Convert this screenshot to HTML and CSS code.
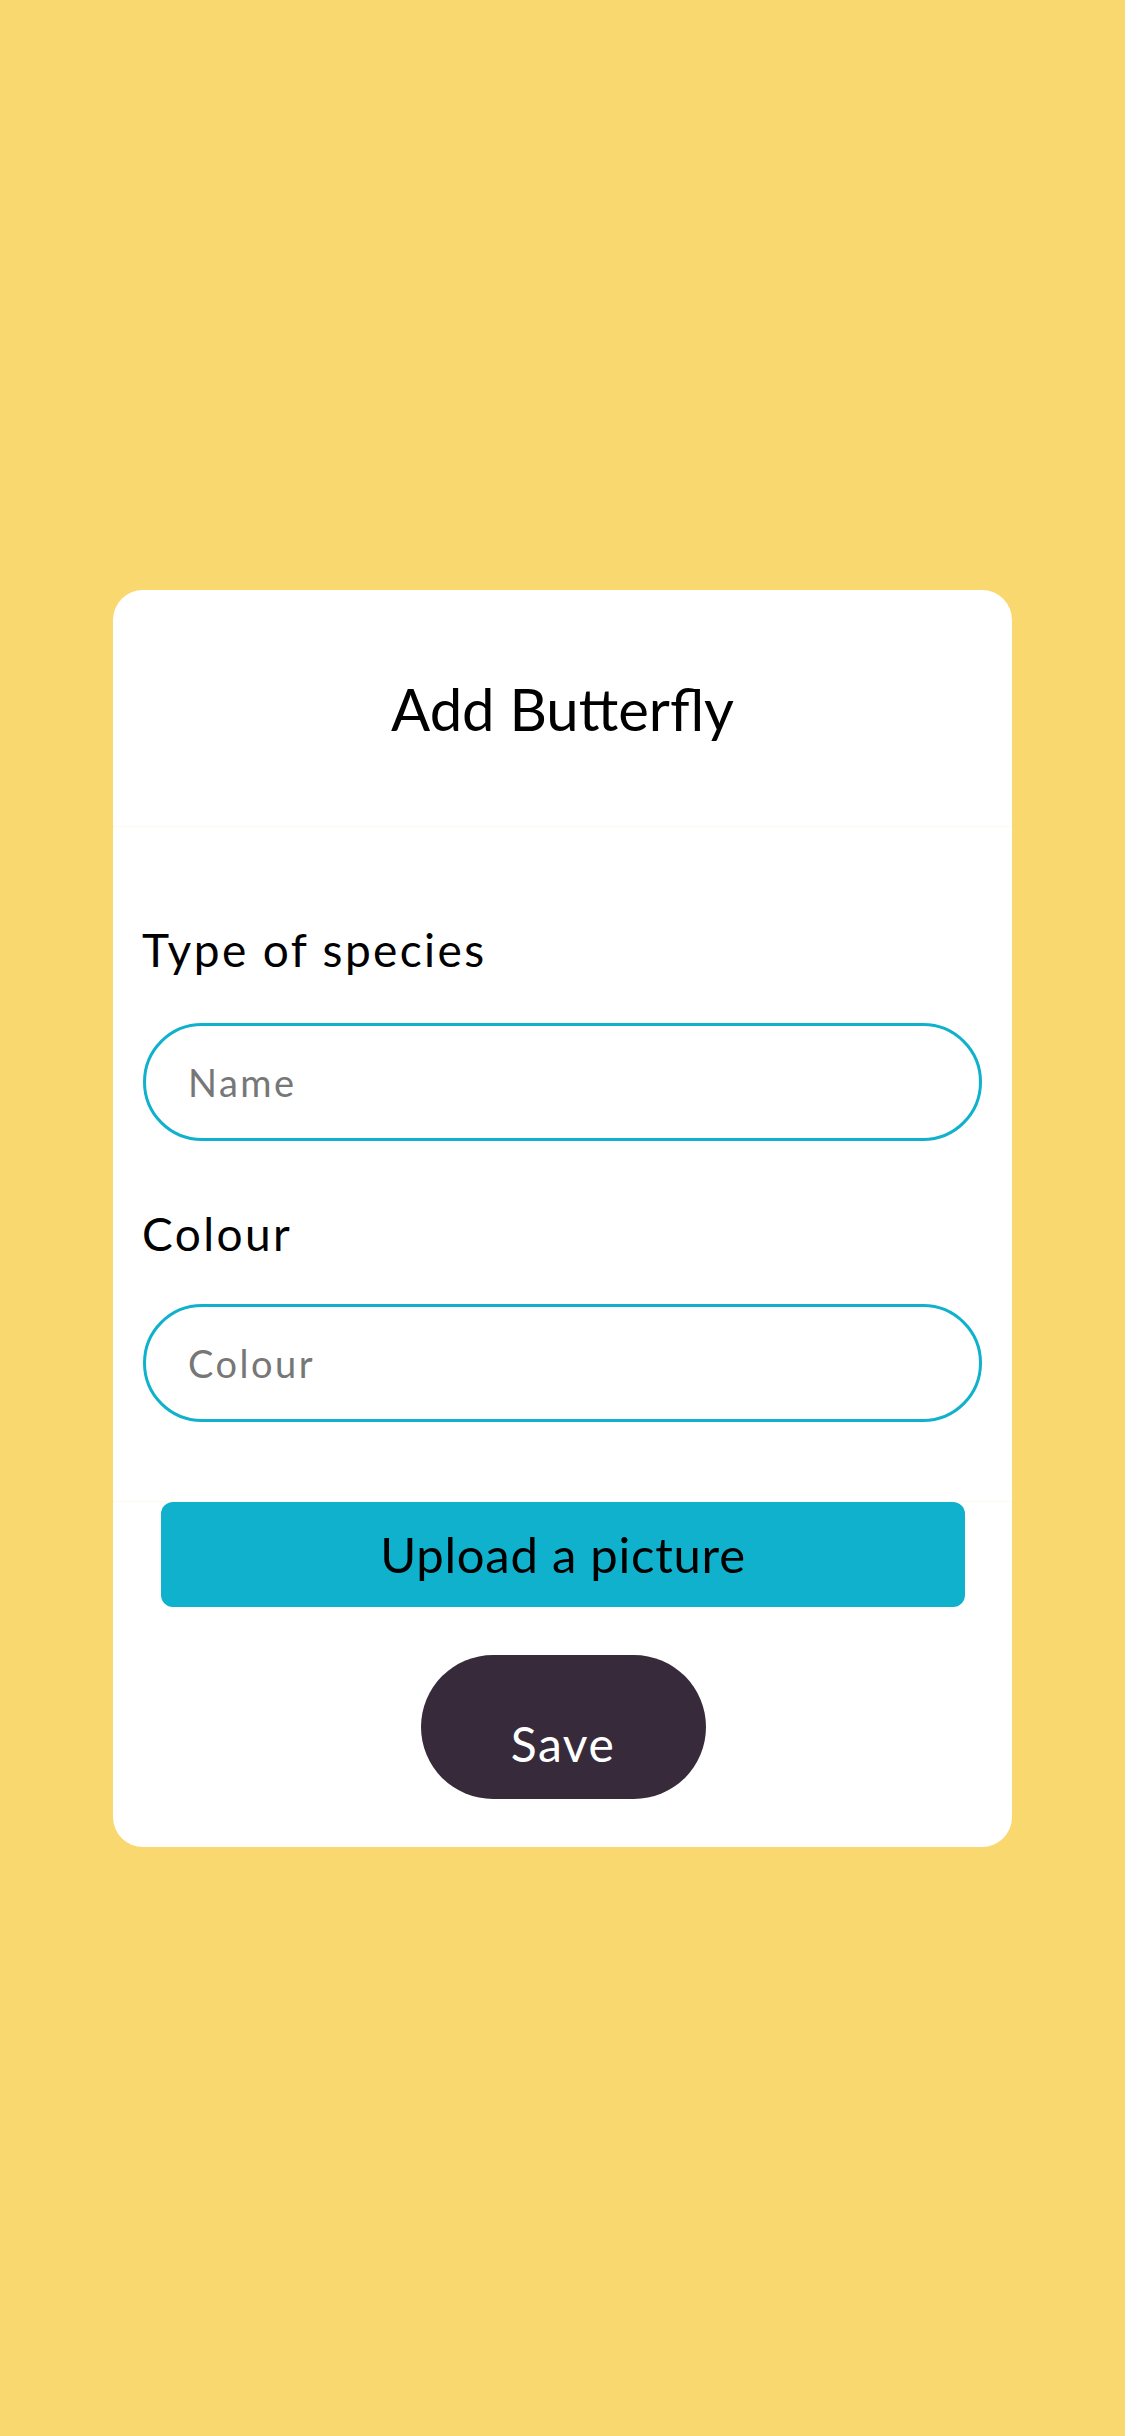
FILE: index.html
```html
<!DOCTYPE html>
<html lang="en">
<head>
<meta charset="utf-8">
<title>Add Butterfly</title>
<link rel="stylesheet" href="styles.css">
</head>
<body>
<main class="page">
  <section class="card">
    <header class="card-header">
      <h1 class="title">Add Butterfly</h1>
    </header>
    <form class="form">
      <label class="label" for="name">Type of species</label>
      <input class="field" id="name" type="text" placeholder="Name">
      <label class="label label-second" for="colour">Colour</label>
      <input class="field" id="colour" type="text" placeholder="Colour">
    </form>
    <div class="actions">
      <button class="upload" type="button">Upload a picture</button>
      <button class="save" type="button">Save</button>
    </div>
  </section>
</main>
</body>
</html>
```
FILE: styles.css
```css
* { box-sizing: border-box; }
html, body { margin: 0; padding: 0; }
body {
  background: #fad870;
  font-family: "Lato", "Open Sans", sans-serif;
  color: #000;
}
.page {
  min-height: 2436px;
  display: flex;
  align-items: center;
  justify-content: center;
}
.card {
  width: 899px;
  height: 1257px;
  background: #fff;
  border-radius: 30px;
  display: flex;
  flex-direction: column;
}
.card-header {
  height: 237px;
  border-bottom: 1px solid #fffaea;
  padding-top: 83px;
}
.title {
  margin: 0;
  font-size: 58px;
  line-height: 72px;
  font-weight: 400;
  text-align: center;
}
.form {
  height: 675px;
  border-bottom: 1px solid #fffaea;
  padding: 96px 30px 0 29px;
  display: flex;
  flex-direction: column;
}
.label {
  font-size: 46px;
  line-height: 54px;
  letter-spacing: 2.4px;
  margin-bottom: 46px;
}
.label-second { margin-top: 66px; margin-bottom: 43px; }
.field {
  height: 118px;
  border: 3px solid #10b1cc;
  border-radius: 59px;
  padding: 0 0 0 42px;
  margin-left: 1px;
  font-family: inherit;
  font-size: 38px;
  letter-spacing: 2.5px;
  color: #000;
  background: #fff;
  outline: none;
}
.field::placeholder { color: #777; }
.actions {
  display: flex;
  flex-direction: column;
  align-items: center;
  padding-left: 1px;
}
.upload {
  width: 804px;
  height: 105px;
  background: #0fb1cc;
  border: none;
  border-radius: 12px;
  font-family: inherit;
  font-size: 49px;
  letter-spacing: 0.75px;
  color: #000;
  padding: 0;
}
.save {
  margin-top: 48px;
  width: 285px;
  height: 144px;
  border: none;
  border-radius: 72px;
  background: #372b3b;
  color: #fff;
  font-family: inherit;
  font-size: 48px;
  letter-spacing: 1.5px;
  padding: 34px 0 0;
}
```
